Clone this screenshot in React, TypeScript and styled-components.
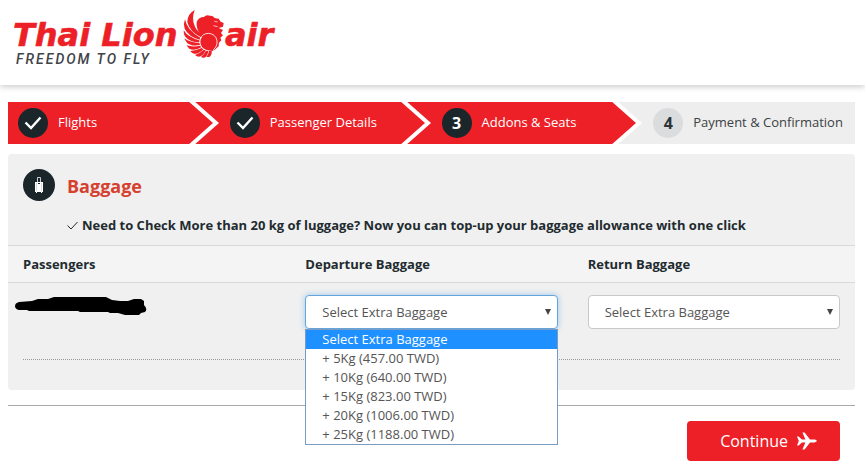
import React, { useState } from "react";
import styled, { createGlobalStyle, css } from "styled-components";

const Global = createGlobalStyle`
  * { box-sizing: border-box; }
  body {
    margin: 0;
    background: #fff;
    color: #222b2f;
    font-family: "Open Sans", "Noto Sans", sans-serif;
    font-size: 13px;
    line-height: 19px;
  }
`;

const Header = styled.header`
  height: 85px;
  padding: 4px 8px;
  background: #fff;
  box-shadow: 0 2px 6px rgba(0, 0, 0, 0.2);
`;

const HomeLink = styled.a`
  display: inline-block;
  svg { display: block; }
`;

const Main = styled.main`
  padding: 17px 10px 0 8px;
`;

const Steps = styled.ol`
  display: grid;
  grid-template-columns: repeat(4, 1fr);
  height: 42px;
  margin: 0 0 10px;
  padding: 0;
  list-style: none;
`;

const Step = styled.li<{ $done: boolean }>`
  display: flex;
  align-items: center;
  padding-left: 10px;
  white-space: nowrap;
  background: ${(p) => (p.$done ? "#ed1f27" : "#eee")};
  color: ${(p) => (p.$done ? "#fff" : "#3c4144")};
`;

const StepMark = styled.span<{ $done: boolean }>`
  display: flex;
  flex: none;
  align-items: center;
  justify-content: center;
  width: 30px;
  height: 30px;
  margin-right: 10px;
  border-radius: 50%;
  font-size: 16px;
  font-weight: 700;
  background: ${(p) => (p.$done ? "#1b262b" : "#dadcde")};
  color: ${(p) => (p.$done ? "#fff" : "#2d3336")};
`;

const StepName = styled.span`
  padding-bottom: 2px;
`;

const StepArrow = styled.svg`
  display: block;
  flex: none;
  width: 31px;
  height: 42px;
  margin-left: auto;
`;

const Panel = styled.section`
  padding-bottom: 30px;
  border-radius: 4px;
  background: #f0f0f0;
`;

const PanelHead = styled.div`
  display: grid;
  grid-template-columns: 32px 1fr;
  column-gap: 12px;
  row-gap: 12px;
  align-items: center;
  padding: 15px 15px 8px;
`;

const PanelIcon = styled.span`
  display: flex;
  align-items: center;
  justify-content: center;
  width: 32px;
  height: 32px;
  border-radius: 50%;
  background: #1b262b;
`;

const PanelTitle = styled.h2`
  margin: 0;
  padding-top: 2px;
  font-size: 18px;
  line-height: 24px;
  font-weight: 700;
  color: #d5402f;
`;

const PanelNote = styled.p`
  display: flex;
  grid-column: 2;
  align-items: center;
  gap: 4px;
  margin: 0;
  line-height: 24px;
  font-weight: 700;
`;

const BaggageTable = styled.table`
  width: 100%;
  table-layout: fixed;
  border-collapse: separate;
  border-spacing: 0;
  text-align: left;
`;

const HeadCell = styled.th`
  height: 38px;
  padding: 0 15px;
  border: solid #d9d9d9;
  border-width: 1px 0;
  background: #f4f4f4;
  font-weight: 700;
`;

const Cell = styled.td`
  height: 76px;
  padding: 12px 15px 0;
  vertical-align: top;
`;

const Redaction = styled.svg`
  display: block;
  width: 132px;
  height: 20px;
  margin-left: -8px;
`;

const DottedRule = styled.hr`
  margin: 0 15px;
  border: 0;
  border-top: 1px dotted #999;
`;

const Picker = styled.div`
  position: relative;
`;

const PickerSelect = styled.select<{ $open: boolean }>`
  display: block;
  width: 100%;
  height: 34px;
  padding: 0 30px 0 16px;
  appearance: none;
  border: 1px solid #c8c8c8;
  border-radius: 4px;
  outline: 0;
  background: #fff;
  color: #555;
  font: inherit;
  ${(p) =>
    p.$open &&
    css`
      border-color: #66a5dc;
      box-shadow: 0 0 6px rgba(102, 175, 233, 0.6);
    `}
`;

const PickerArrow = styled.svg`
  position: absolute;
  top: 14px;
  right: 7px;
  width: 6px;
  height: 6px;
  pointer-events: none;
`;

const Menu = styled.ul`
  position: absolute;
  top: 100%;
  left: 0;
  right: 0;
  z-index: 1;
  margin: 0;
  padding: 0;
  border: 1px solid #7a9cc4;
  background: #fff;
  list-style: none;
`;

const MenuItem = styled.li<{ $selected: boolean }>`
  padding: 0 16px;
  cursor: default;
  background: ${(p) => (p.$selected ? "#1e90ff" : "#fff")};
  color: ${(p) => (p.$selected ? "#fff" : "#555")};
`;

const Footer = styled.footer`
  display: flex;
  justify-content: flex-end;
  margin-top: 15px;
  padding: 15px 15px 6px;
  border-top: 1px solid #aaa;
`;

const ContinueButton = styled.button`
  display: flex;
  align-items: center;
  justify-content: flex-end;
  gap: 9px;
  width: 153px;
  height: 40px;
  padding: 0 23px;
  border: 0;
  border-radius: 4px;
  background: #ed1f27;
  color: #fff;
  font: inherit;
  font-size: 16px;
`;

const steps = ["Flights", "Passenger Details", "Addons & Seats", "Payment & Confirmation"];
const current = 2;

const options = [
  "Select Extra Baggage",
  "+ 5Kg (457.00 TWD)",
  "+ 10Kg (640.00 TWD)",
  "+ 15Kg (823.00 TWD)",
  "+ 20Kg (1006.00 TWD)",
  "+ 25Kg (1188.00 TWD)",
];

const Logo = () => (
  <svg width="272" height="66" viewBox="8 4 272 66" role="img" aria-label="Thai Lion Air, freedom to fly">
    <g
      fill="#ed1f27"
      stroke="#ed1f27"
      strokeWidth=".6"
      strokeLinejoin="round"
      fontFamily="DejaVu Sans"
      fontWeight="700"
      fontStyle="italic"
      fontSize="32"
    >
      <text x="13" y="46">Thai Lion</text>
      <text x="225" y="46">air</text>
    </g>
    <text x="16" y="64" fill="#3f4448" fontFamily="Roboto" fontWeight="500" fontStyle="italic" fontSize="14" letterSpacing="2">
      FREEDOM TO FLY
    </text>
    <g transform="scale(.33333)" fill="#ed1f27">
      <path d="M584 30 Q574 56 584 78 Q590 94 610 103 L603 112 Q568 94 562 66 Q562 42 584 30Z" />
      <path d="M555 58 Q560 90 601 113 L599 119 Q566 110 554 86 Q549 72 555 58Z" />
      <path d="M551 91 Q564 112 598 121 L598 127 Q568 126 556 110 Q550 102 551 91Z" />
      <path d="M553 115 Q570 128 598 129 L600 135 Q574 140 561 128 Q555 122 553 115Z" />
      <path d="M560 136 Q578 142 601 137 L604 142 Q586 153 569 147 Q563 143 560 136Z" />
      <path d="M571 153 Q588 152 605 144 L610 148 Q596 164 582 161 Q575 159 571 153Z" />
      <path d="M585 165 Q600 160 611 149 L617 151 Q610 168 597 170 Q590 170 585 165Z" />
      <path d="M603 171 Q613 162 618 152 L625 153 Q623 168 613 173 Q608 174 603 171Z" />
      <path d="M619 171 Q626 162 627 153 L635 152 Q637 164 628 171Z" />
      <path d="M590 66 Q596 51 612 51 Q618 43 630 47 Q638 46 644 54 L656 56 L662 65 L671 69 L669 80 L656 84 L669 90 L663 99 L669 106 L661 113 L664 121 L657 128 L656 139 L646 148 L637 153 L620 150 L600 100 Q588 86 590 66Z" />
      <circle cx="625" cy="126" r="24" />
      <path d="M600 118 Q607 100 626 100 Q647 102 651 122 Q653 139 640 149" fill="none" stroke="#fff" strokeWidth="2.5" />
      <path d="M643 64 L653 66 M640 77 L653 80" fill="none" stroke="#fff" strokeWidth="2" />
    </g>
  </svg>
);

const Tick = () => (
  <svg width="18" height="14" viewBox="0 0 18 14" fill="none" stroke="#fff" strokeWidth="2.4" aria-hidden="true">
    <path d="M1.5 6.5 L7 12 L16.5 1.5" />
  </svg>
);

const Suitcase = () => (
  <svg width="10" height="18" viewBox="0 0 10 18" aria-hidden="true">
    <path d="M3.5 6 V1.5 H6.5 V6" fill="none" stroke="#c9ced0" />
    <path d="M1 6 H9 V16 H8 V17 H7 V16 H3 V17 H2 V16 H1Z" fill="#fff" />
    <path d="M2.5 7 V15 M7.5 7 V15" stroke="#aab4ba" strokeWidth=".5" />
    <path d="M4 7.5 H6" stroke="#1b262b" />
  </svg>
);

const Plane = () => (
  <svg width="20" height="18" viewBox="0 0 20 18" fill="#fff" aria-hidden="true">
    <path d="M0 4.5 H1.6 L5 7.6 H8.4 L5.4 .5 H7.6 L13 7.6 H17.5 Q19.8 8 19.8 9 Q19.8 10 17.5 10.4 H13 L7.6 17.5 H5.4 L8.4 10.4 H5 L1.6 13.5 H0 L1.8 9Z" />
  </svg>
);

function BaggagePicker({ label, initiallyOpen = false }: { label: string; initiallyOpen?: boolean }) {
  const [open, setOpen] = useState(initiallyOpen);
  const [value, setValue] = useState(options[0]);
  return (
    <Picker>
      <PickerSelect aria-label={label} $open={open} value={value} onChange={(e) => setValue(e.target.value)}>
        {options.map((o) => (
          <option key={o}>{o}</option>
        ))}
      </PickerSelect>
      <PickerArrow viewBox="0 0 7 7" aria-hidden="true">
        <path d="M0 0 H7 L3.5 7Z" fill="#444" />
      </PickerArrow>
      {open && (
        <Menu role="listbox" aria-label={label}>
          {options.map((o) => (
            <MenuItem
              key={o}
              role="option"
              aria-selected={o === value}
              $selected={o === value}
              onClick={() => {
                setValue(o);
                setOpen(false);
              }}
            >
              {o}
            </MenuItem>
          ))}
        </Menu>
      )}
    </Picker>
  );
}

export default function App() {
  return (
    <>
      <Global />
      <Header>
        <HomeLink href="#">
          <Logo />
        </HomeLink>
      </Header>
      <Main>
        <Steps>
          {steps.map((name, i) => (
            <Step key={name} $done={i <= current} aria-current={i === current ? "step" : undefined}>
              <StepMark $done={i <= current}>{i < current ? <Tick /> : i + 1}</StepMark>
              <StepName>{name}</StepName>
              {i <= current && (
                <StepArrow viewBox="0 0 31 42" aria-hidden="true">
                  {i === current && <path d="M4 0 H31 V42 H4 L29 21Z" fill="#eee" />}
                  <path d="M1 -2 L27 21 L1 44" fill="none" stroke="#fff" strokeWidth="4" />
                </StepArrow>
              )}
            </Step>
          ))}
        </Steps>
        <Panel>
          <PanelHead>
            <PanelIcon>
              <Suitcase />
            </PanelIcon>
            <PanelTitle>Baggage</PanelTitle>
            <PanelNote>
              <svg width="11" height="9" viewBox="0 0 11 9" fill="none" stroke="#222b2f" aria-hidden="true">
                <path d="M.5 4.5 L4 8 L10.5 1" />
              </svg>
              Need to Check More than 20 kg of luggage? Now you can top-up your baggage allowance with one click
            </PanelNote>
          </PanelHead>
          <BaggageTable>
            <thead>
              <tr>
                <HeadCell scope="col">Passengers</HeadCell>
                <HeadCell scope="col">Departure Baggage</HeadCell>
                <HeadCell scope="col">Return Baggage</HeadCell>
              </tr>
            </thead>
            <tbody>
              <tr>
                <Cell>
                  <Redaction viewBox="15 295 132 20" aria-label="Passenger name hidden">
                    <path d="M19 302 L32 301 L38 299 L48 299 L54 297 H106 L112 300 L120 301 H128 L134 299 H141 L144 301 L144 305 Q148 309 145 312 L141 313 L139 315 H125 L118 313 H110 L108 312 H80 L78 311 H29 L27 310 H19 Q15 309 15 306 Q15 303 19 302Z" />
                  </Redaction>
                </Cell>
                <Cell>
                  <BaggagePicker label="Departure Baggage" initiallyOpen />
                </Cell>
                <Cell>
                  <BaggagePicker label="Return Baggage" />
                </Cell>
              </tr>
            </tbody>
          </BaggageTable>
          <DottedRule />
        </Panel>
        <Footer>
          <ContinueButton type="button">
            Continue
            <Plane />
          </ContinueButton>
        </Footer>
      </Main>
    </>
  );
}
